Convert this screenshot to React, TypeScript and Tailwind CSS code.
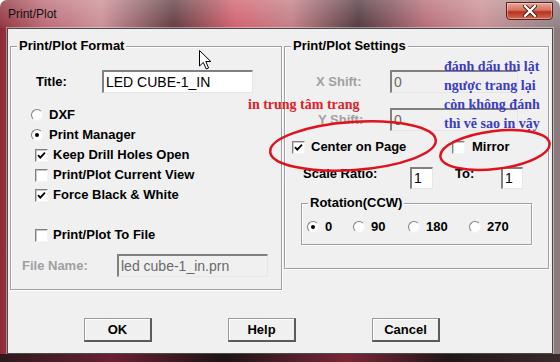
import React from 'react';

const ui = { fontFamily: '"Liberation Sans", Arial, sans-serif' };
const serif = { fontFamily: '"Liberation Serif", "Times New Roman", serif' };

function GroupBox({ title, className, children }: { title: string; className: string; children?: React.ReactNode }) {
  return (
    <div className={`relative border border-[#a0a0a0] shadow-[inset_1px_1px_0_#fff,1px_1px_0_#fff] ${className}`}>
      <span className="absolute left-[6px] -top-[9px] bg-[#f0f0f0] px-[2px] text-[13px] font-bold leading-[16px] text-black">
        {title}
      </span>
      {children}
    </div>
  );
}

function Check({ on }: { on?: boolean }) {
  return (
    <span className="flex h-[13px] w-[13px] shrink-0 items-center justify-center border border-t-[#808080] border-l-[#808080] border-b-[#f4f4f4] border-r-[#f4f4f4] bg-white shadow-[inset_1px_1px_0_#c8c8c8]">
      {on && (
        <svg width="9" height="9" viewBox="0 0 9 9">
          <path d="M1 4.2 L3.3 6.6 L8 1.6" fill="none" stroke="#000" strokeWidth="1.8" />
        </svg>
      )}
    </span>
  );
}

function Radio({ on }: { on?: boolean }) {
  return (
    <span className="flex h-[12px] w-[12px] shrink-0 items-center justify-center rounded-full border border-t-[#808080] border-l-[#808080] border-b-[#f4f4f4] border-r-[#f4f4f4] bg-white">
      {on && <span className="h-[4px] w-[4px] rounded-full bg-black" />}
    </span>
  );
}

function Field({ value, width, disabled, height = 'h-[23px]' }: { value: string; width: string; disabled?: boolean; height?: string }) {
  return (
    <div
      className={`${width} ${height} flex items-center border-t-2 border-l-2 border-b border-r border-t-[#808080] border-l-[#808080] border-b-[#e6e6e6] border-r-[#e6e6e6] pl-[2px] text-[14px] font-normal ${
        disabled ? 'bg-[#f0f0f0] text-[#6a6a6a]' : 'bg-white text-black'
      }`}
    >
      {value}
    </div>
  );
}

function Button({ label }: { label: string }) {
  return (
    <div className="flex h-[24px] w-[68px] items-center justify-center border border-[#9a9a9a] border-b-2 border-r-2 border-b-[#5a5a5a] border-r-[#5a5a5a] bg-[#f0f0f0] text-[13px] font-bold shadow-[inset_1px_1px_0_#fff]">
      {label}
    </div>
  );
}

export default function App() {
  return (
    <div
      className="relative flex h-[362px] w-[560px] flex-col overflow-hidden rounded-t-[7px] bg-[linear-gradient(90deg,#8c2a36_0%,#b86470_8%,#c98a92_18%,#5a3438_31%,#d05a68_42%,#c07880_52%,#4a3036_64%,#b46672_76%,#c88c92_86%,#8a7a7c_100%)] text-black"
      style={ui}
    >
      <div className="pointer-events-none absolute inset-x-0 top-0 h-[28px] bg-[linear-gradient(180deg,rgba(255,255,255,0.25),rgba(255,255,255,0.05))]" />
      <div className="relative flex h-[28px] items-center pl-[8px] text-[12px] text-[#111]">
        Print/Plot
        <div className="absolute right-[7px] top-[2px] flex h-[18px] w-[47px] items-center justify-center rounded-b-[4px] border border-[#5a2020] bg-[linear-gradient(180deg,#e9a898_0%,#d77262_45%,#b8321c_55%,#d06a52_100%)] shadow-[inset_0_0_0_1px_rgba(255,255,255,0.35)]">
          <svg width="14" height="12" viewBox="0 0 14 12">
            <path d="M2 1 L12 11 M12 1 L2 11" stroke="#3a1a14" strokeWidth="4" strokeLinecap="round" />
            <path d="M2 1 L12 11 M12 1 L2 11" stroke="#fff" strokeWidth="2.4" strokeLinecap="round" />
          </svg>
        </div>
      </div>

      <div className="mx-[7px] flex h-[326px] flex-col border border-[#4a4a4a] bg-[#f0f0f0] shadow-[0_0_0_1px_rgba(255,255,255,0.4)]">
        <div className="flex pl-[2px] pt-[17px]">
          <GroupBox title="Print/Plot Format" className="flex h-[244px] w-[272px] flex-col">
            <div className="mt-[23px] flex h-[23px] items-center pl-[25px] text-[13px] font-bold">
              <span className="w-[66px]">Title:</span>
              <Field value="LED CUBE-1_IN" width="w-[151px]" />
            </div>
            <div className="mt-[12px] flex flex-col text-[13px] font-bold">
              <div className="flex h-[20px] items-center gap-[6px] pl-[20px]">
                <Radio />
                <span>DXF</span>
              </div>
              <div className="flex h-[20px] items-center gap-[6px] pl-[20px]">
                <Radio on />
                <span>Print Manager</span>
              </div>
              <div className="flex h-[20px] items-center gap-[5px] pl-[24px]">
                <Check on />
                <span>Keep Drill Holes Open</span>
              </div>
              <div className="flex h-[20px] items-center gap-[5px] pl-[24px]">
                <Check />
                <span>Print/Plot Current View</span>
              </div>
              <div className="flex h-[20px] items-center gap-[5px] pl-[24px]">
                <Check on />
                <span>Force Black &amp; White</span>
              </div>
              <div className="mt-[20px] flex h-[20px] items-center gap-[5px] pl-[24px]">
                <Check />
                <span>Print/Plot To File</span>
              </div>
            </div>
            <div className="mt-[9px] flex h-[23px] items-center pl-[11px] text-[13px] font-bold">
              <span className="w-[95px] text-[#a0a0a0]">File Name:</span>
              <Field value="led cube-1_in.prn" width="w-[151px]" disabled />
            </div>
          </GroupBox>

          <GroupBox title="Print/Plot Settings" className="ml-[2px] flex h-[223px] w-[265px] flex-col">
            <div className="mt-[23px] flex h-[23px] items-center pl-[31px] text-[13px] font-bold">
              <span className="w-[74px] text-[#a0a0a0]">X Shift:</span>
              <Field value="0" width="w-[128px]" disabled />
            </div>
            <div className="mt-[15px] flex h-[23px] items-center pl-[33px] text-[13px] font-bold">
              <span className="w-[72px] text-[#a0a0a0]">Y Shift:</span>
              <Field value="0" width="w-[128px]" disabled />
            </div>
            <div className="mt-[6px] flex h-[20px] items-center pl-[7px] text-[13px] font-bold">
              <div className="flex w-[160px] items-center gap-[6px]">
                <Check on />
                <span>Center on Page</span>
              </div>
              <div className="flex items-center gap-[7px]">
                <Check />
                <span>Mirror</span>
              </div>
            </div>
            <div className="mt-[10px] flex h-[22px] items-start pl-[18px] text-[13px] font-bold">
              <span className="-mt-[1px] w-[107px] leading-[16px]">Scale Ratio:</span>
              <Field value="1" width="w-[23px]" height="h-[22px]" />
              <span className="-mt-[1px] ml-[22px] w-[46px] leading-[16px]">To:</span>
              <Field value="1" width="w-[22px]" height="h-[22px]" />
            </div>
            <GroupBox title="Rotation(CCW)" className="ml-[16px] mt-[14px] h-[42px] w-[231px]">
              <div className="mt-[13px] flex h-[20px] items-center pl-[5px] text-[13px] font-bold">
                <div className="flex w-[46px] items-center gap-[6px]">
                  <Radio on />
                  <span>0</span>
                </div>
                <div className="flex w-[55px] items-center gap-[6px]">
                  <Radio />
                  <span>90</span>
                </div>
                <div className="flex w-[61px] items-center gap-[6px]">
                  <Radio />
                  <span>180</span>
                </div>
                <div className="flex items-center gap-[6px]">
                  <Radio />
                  <span>270</span>
                </div>
              </div>
            </GroupBox>
          </GroupBox>
        </div>

        <div className="mt-[28px] flex gap-[76px] pl-[76px]">
          <Button label="OK" />
          <Button label="Help" />
          <Button label="Cancel" />
        </div>
      </div>
      <div className="h-[8px] bg-[linear-gradient(90deg,#2a1a1c,#6a2030_20%,#1c1416_40%,#7a2636_62%,#201618_80%,#3a2a2c)]" />

      {/* annotations drawn over the screenshot */}
      <div className="pointer-events-none absolute left-[248px] top-[96px] text-[14px] font-bold leading-[18px] text-[#e0202a]" style={serif}>
        in trung tâm trang
      </div>
      <div className="pointer-events-none absolute left-[444px] top-[57px] flex flex-col text-[14px] font-bold leading-[19px] text-[#3c3cc4]" style={serif}>
        <span>đánh dấu thì lật</span>
        <span>ngược trang lại</span>
        <span>còn không đánh</span>
        <span>thì vẽ sao in vậy</span>
      </div>
      <svg className="pointer-events-none absolute left-0 top-0" width="560" height="362" viewBox="0 0 560 362">
        <ellipse cx="353" cy="146" rx="83" ry="24" transform="rotate(-4 353 146)" fill="none" stroke="#e0121e" strokeWidth="2.5" />
        <ellipse cx="495" cy="150" rx="55" ry="19" transform="rotate(-7 495 150)" fill="none" stroke="#e0121e" strokeWidth="2.5" />
        <path d="M199.5 50.5 L199.5 66 L203.3 62.4 L206.3 69 L208.6 68 L205.8 61.5 L210.8 61.5 Z" fill="#fff" stroke="#000" strokeWidth="1" />
      </svg>
    </div>
  );
}
